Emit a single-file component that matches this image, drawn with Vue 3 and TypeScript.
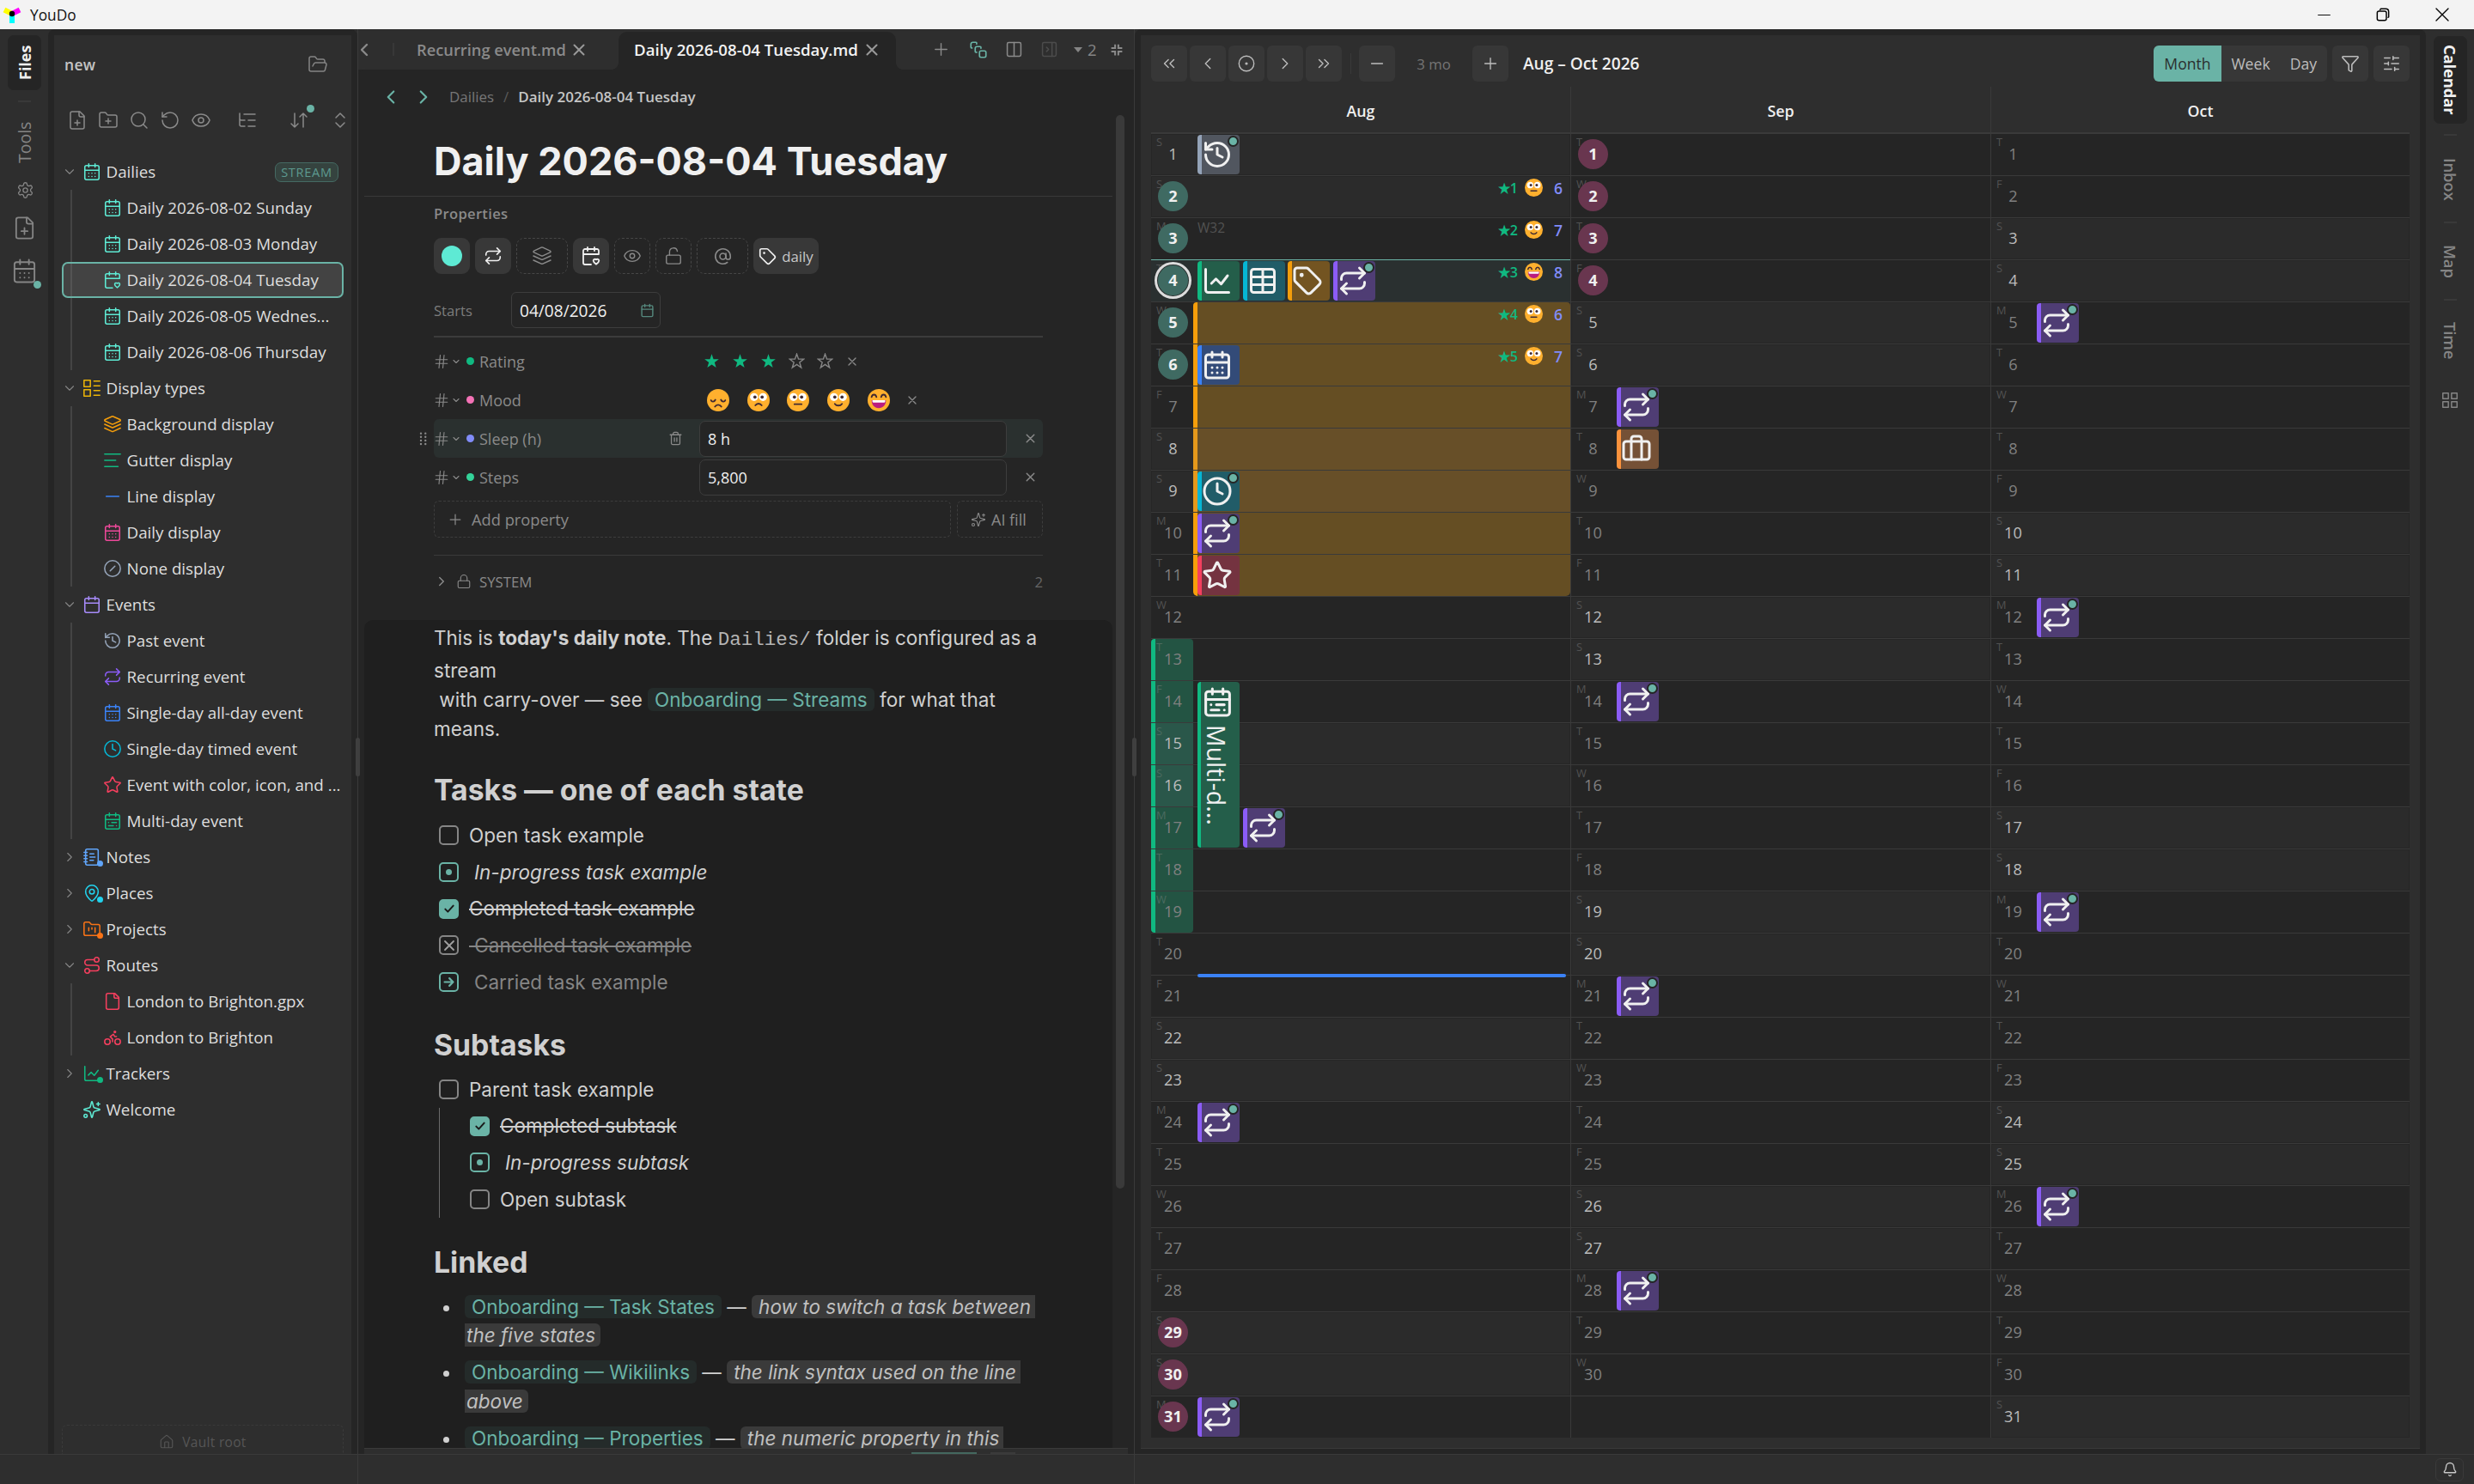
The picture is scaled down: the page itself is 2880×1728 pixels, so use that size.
<script setup lang="ts">
import { h } from 'vue'

const CAL = '<rect x="3" y="4" width="18" height="18" rx="2"/><path d="M8 2v4M16 2v4M3 10h18"/>'
const icons: Record<string, string> = {
  calDays: CAL + '<path d="M8 14h.01M12 14h.01M16 14h.01M8 18h.01M12 18h.01M16 18h.01"/>',
  cal: CAL,
  calRange: CAL + '<path d="M17 14h-6M13 18H7M7 14h.01M17 18h.01"/>',
  calHeart: '<path d="M3 10h18V6a2 2 0 0 0-2-2H5a2 2 0 0 0-2 2v14a2 2 0 0 0 2 2h7M8 2v4M16 2v4"/><path d="M21.3 17.5a2 2 0 0 0-3.3-1.2 2 2 0 0 0-3.3 1.2c0 2 3.3 4.2 3.3 4.2s3.3-2.2 3.3-4.2z"/>',
  filePlus: '<path d="M15 2H6a2 2 0 0 0-2 2v16a2 2 0 0 0 2 2h12a2 2 0 0 0 2-2V7z"/><path d="M14 2v4a2 2 0 0 0 2 2h4M9 15h6M12 18v-6"/>',
  file: '<path d="M15 2H6a2 2 0 0 0-2 2v16a2 2 0 0 0 2 2h12a2 2 0 0 0 2-2V7z"/><path d="M14 2v4a2 2 0 0 0 2 2h4"/>',
  folderPlus: '<path d="M12 10v6M9 13h6M20 20a2 2 0 0 0 2-2V8a2 2 0 0 0-2-2h-7.9a2 2 0 0 1-1.69-.9L9.6 3.9A2 2 0 0 0 7.93 3H4a2 2 0 0 0-2 2v13a2 2 0 0 0 2 2Z"/>',
  folderOpen: '<path d="m6 14 1.5-2.9A2 2 0 0 1 9.24 10H20a2 2 0 0 1 1.94 2.5l-1.54 6a2 2 0 0 1-1.95 1.5H4a2 2 0 0 1-2-2V5a2 2 0 0 1 2-2h3.9a2 2 0 0 1 1.69.9l.81 1.2a2 2 0 0 0 1.67.9H18a2 2 0 0 1 2 2v2"/>',
  search: '<circle cx="11" cy="11" r="8"/><path d="m21 21-4.3-4.3"/>',
  rotate: '<path d="M3 12a9 9 0 1 0 9-9 9.75 9.75 0 0 0-6.74 2.74L3 8"/><path d="M3 3v5h5"/>',
  eye: '<path d="M2.062 12.348a1 1 0 0 1 0-.696 10.75 10.75 0 0 1 19.876 0 1 1 0 0 1 0 .696 10.75 10.75 0 0 1-19.876 0"/><circle cx="12" cy="12" r="3"/>',
  listTree: '<path d="M21 12h-8M21 5H8M21 19h-8M3 4v6c0 1.1.9 2 2 2h4M3 10v7c0 1.1.9 2 2 2h4"/>',
  sort: '<path d="m3 16 4 4 4-4M7 20V4M21 8l-4-4-4 4M17 4v16"/>',
  upDown: '<path d="m7 15 5 5 5-5M7 9l5-5 5 5"/>',
  gear: '<path d="M12.22 2h-.44a2 2 0 0 0-2 2v.18a2 2 0 0 1-1 1.73l-.43.25a2 2 0 0 1-2 0l-.15-.08a2 2 0 0 0-2.73.73l-.22.38a2 2 0 0 0 .73 2.73l.15.1a2 2 0 0 1 1 1.72v.51a2 2 0 0 1-1 1.74l-.15.09a2 2 0 0 0-.73 2.73l.22.38a2 2 0 0 0 2.73.73l.15-.08a2 2 0 0 1 2 0l.43.25a2 2 0 0 1 1 1.73V20a2 2 0 0 0 2 2h.44a2 2 0 0 0 2-2v-.18a2 2 0 0 1 1-1.73l.43-.25a2 2 0 0 1 2 0l.15.08a2 2 0 0 0 2.73-.73l.22-.39a2 2 0 0 0-.73-2.73l-.15-.08a2 2 0 0 1-1-1.74v-.5a2 2 0 0 1 1-1.74l.15-.09a2 2 0 0 0 .73-2.73l-.22-.38a2 2 0 0 0-2.73-.73l-.15.08a2 2 0 0 1-2 0l-.43-.25a2 2 0 0 1-1-1.73V4a2 2 0 0 0-2-2z"/><circle cx="12" cy="12" r="3"/>',
  down: '<path d="m6 9 6 6 6-6"/>',
  right: '<path d="m9 18 6-6-6-6"/>',
  left: '<path d="m15 18-6-6 6-6"/>',
  dLeft: '<path d="m11 17-5-5 5-5M18 17l-5-5 5-5"/>',
  dRight: '<path d="m6 17 5-5-5-5M13 17l5-5-5-5"/>',
  target: '<circle cx="12" cy="12" r="9.5"/><circle cx="12" cy="12" r="1"/>',
  minus: '<path d="M5 12h14"/>',
  plus: '<path d="M5 12h14M12 5v14"/>',
  x: '<path d="M18 6 6 18M6 6l12 12"/>',
  layoutList: '<rect x="2" y="2" width="8" height="8"/><rect x="2" y="14" width="8" height="8"/><path d="M14.5 3H22M14.5 9H22M14.5 15H22M14.5 21H22"/>',
  layers: '<path d="M12.83 2.18a2 2 0 0 0-1.66 0L2.6 6.08a1 1 0 0 0 0 1.83l8.58 3.91a2 2 0 0 0 1.66 0l8.58-3.9a1 1 0 0 0 0-1.83z"/><path d="m2 12 9.17 4.16a2 2 0 0 0 1.66 0L22 12M2 17l9.17 4.16a2 2 0 0 0 1.66 0L22 17"/>',
  alignLeft: '<path d="M2 4h20M2 12h14M2 20h17"/>',
  line: '<path d="M4 12h16"/>',
  none: '<circle cx="12" cy="12" r="10"/><path d="m9 15 6-6"/>',
  history: '<path d="M3 12a9 9 0 1 0 9-9 9.75 9.75 0 0 0-6.74 2.74L3 8"/><path d="M3 3v5h5M12 7v5l4 2"/>',
  repeat: '<path d="m17 2 4 4-4 4"/><path d="M3 11v-1a4 4 0 0 1 4-4h14M7 22l-4-4 4-4"/><path d="M21 13v1a4 4 0 0 1-4 4H3"/>',
  clock: '<circle cx="12" cy="12" r="10"/><path d="M12 6v6l4 2"/>',
  star: '<path d="M11.525 2.295a.53.53 0 0 1 .95 0l2.31 4.679a2.123 2.123 0 0 0 1.595 1.16l5.166.756a.53.53 0 0 1 .294.904l-3.736 3.638a2.123 2.123 0 0 0-.611 1.878l.882 5.14a.53.53 0 0 1-.771.56l-4.618-2.428a2.122 2.122 0 0 0-1.973 0L6.396 21.01a.53.53 0 0 1-.77-.56l.881-5.139a2.122 2.122 0 0 0-.611-1.879L2.16 9.795a.53.53 0 0 1 .294-.906l5.165-.755a2.122 2.122 0 0 0 1.597-1.16z"/>',
  notebook: '<rect x="4" y="2" width="16" height="20" rx="2"/><path d="M2 6h4M2 10h4M2 14h4M2 18h4M9.5 8h5M9.5 12H16M9.5 16H14"/>',
  pin: '<path d="M20 10c0 4.993-5.539 10.193-7.399 11.799a1 1 0 0 1-1.202 0C9.539 20.193 4 14.993 4 10a8 8 0 0 1 16 0"/><circle cx="12" cy="10" r="3"/>',
  kanban: '<path d="M4 20h16a2 2 0 0 0 2-2V8a2 2 0 0 0-2-2h-7.93a2 2 0 0 1-1.66-.9l-.82-1.2A2 2 0 0 0 7.93 3H4a2 2 0 0 0-2 2v13c0 1.1.9 2 2 2ZM8 10v4M12 10v2M16 10v6"/>',
  route: '<circle cx="6" cy="19" r="3"/><path d="M9 19h8.5a3.5 3.5 0 0 0 0-7h-11a3.5 3.5 0 0 1 0-7H15"/><circle cx="18" cy="5" r="3"/>',
  bike: '<circle cx="18.5" cy="17.5" r="3.5"/><circle cx="5.5" cy="17.5" r="3.5"/><circle cx="15" cy="5" r="1"/><path d="M12 17.5V14l-3-3 4-3 2 3h2"/>',
  chart: '<path d="M3 3v16a2 2 0 0 0 2 2h16M7.500 14l3.500-3.500 4 4 5-6.500"/>',
  sparkles: '<path d="M9.937 15.5A2 2 0 0 0 8.5 14.063l-6.135-1.582a.5.5 0 0 1 0-.962L8.5 9.936A2 2 0 0 0 9.937 8.5l1.582-6.135a.5.5 0 0 1 .963 0L14.063 8.5A2 2 0 0 0 15.5 9.937l6.135 1.581a.5.5 0 0 1 0 .964L15.5 14.063a2 2 0 0 0-1.437 1.437l-1.582 6.135a.5.5 0 0 1-.963 0zM20 3v4M22 5h-4"/><circle cx="4" cy="20" r="2"/>',
  house: '<path d="M15 21v-8a1 1 0 0 0-1-1h-4a1 1 0 0 0-1 1v8M3 10a2 2 0 0 1 .709-1.528l7-5.999a2 2 0 0 1 2.582 0l7 5.999A2 2 0 0 1 21 10v9a2 2 0 0 1-2 2H5a2 2 0 0 1-2-2z"/>',
  nested: '<path d="M3 9.5h-.5a1 1 0 0 1-1-1V4A2.500 2.500 0 0 1 4 1.500h4.500a1 1 0 0 1 1 1V4"/><path d="M9.5 15.500h-1a1 1 0 0 1-1-1V10A2.500 2.500 0 0 1 10 7.500h4.500a1 1 0 0 1 1 1V10"/><rect x="13.500" y="13.500" width="9" height="9" rx="2"/>',
  columns: '<rect x="2" y="2" width="20" height="20" rx="2"/><path d="M12 2v20"/>',
  panelRight: '<rect x="2" y="2" width="20" height="20" rx="2"/><path d="M16 2v20M8 9l3 3-3 3"/>',
  shrink: '<path d="M3.5 9.300h6V3.500M20.500 9.300h-6V3.500M3.500 14.700h6v5.800M20.500 14.700h-6v5.800" stroke-linecap="butt" stroke-linejoin="miter"/>',
  unlock: '<rect x="3" y="11" width="18" height="11" rx="2"/><path d="M7 11V7a5 5 0 0 1 9.9-1"/>',
  lock: '<rect x="3" y="11" width="18" height="11" rx="2"/><path d="M7 11V7a5 5 0 0 1 10 0v4"/>',
  at: '<circle cx="12" cy="12" r="4"/><path d="M16 8v5a3 3 0 0 0 6 0v-1a10 10 0 1 0-4 8"/>',
  tag: '<path d="M12.586 2.586A2 2 0 0 0 11.172 2H4a2 2 0 0 0-2 2v7.172a2 2 0 0 0 .586 1.414l8.704 8.704a2.426 2.426 0 0 0 3.42 0l6.58-6.58a2.426 2.426 0 0 0 0-3.42z"/><circle cx="7.5" cy="7.5" r=".6" fill="currentColor"/>',
  trash: '<path d="M10 11v6M14 11v6M19 6v14a2 2 0 0 1-2 2H7a2 2 0 0 1-2-2V6M3 6h18M8 6V4a2 2 0 0 1 2-2h4a2 2 0 0 1 2 2v2"/>',
  grip: '<path d="M8 3.500h.01M8 9h.01M8 14.500h.01M8 20h.01M15 3.500h.01M15 9h.01M15 14.500h.01M15 20h.01"/>',
  hash: '<path d="M3 9h18M3 15h18M10 2 8 22M16 2l-2 20"/>',
  table: '<rect x="3" y="3" width="18" height="18" rx="2"/><path d="M3 9h18M3 15h18M12 3v18"/>',
  luggage: '<path d="M16 20V4a2 2 0 0 0-2-2h-4a2 2 0 0 0-2 2v16"/><rect x="2" y="6" width="20" height="14" rx="2"/>',
  funnel: '<path d="M10 20a1 1 0 0 0 .553.895l2 1A1 1 0 0 0 14 21v-7a2 2 0 0 1 .517-1.341L21.74 4.67A1 1 0 0 0 21 3H3a1 1 0 0 0-.742 1.67l7.225 7.989A2 2 0 0 1 10 14z"/>',
  sliders: '<path d="M10 5H3M12 19H3M14 3v4M16 17v4M21 12h-9M21 19h-5M21 5h-7M8 10v4M8 12H3"/>',
  grid: '<rect x="3" y="3" width="7" height="7"/><rect x="14" y="3" width="7" height="7"/><rect x="14" y="14" width="7" height="7"/><rect x="3" y="14" width="7" height="7"/>',
  bell: '<path d="M10.268 21a2 2 0 0 0 3.464 0M3.262 15.326A1 1 0 0 0 4 17h16a1 1 0 0 0 .74-1.673C19.41 13.956 18 12.499 18 8A6 6 0 0 0 6 8c0 4.499-1.411 5.956-2.738 7.326"/>',
  check: '<path d="m5 13 4.5 4.5L19 7"/>',
  arrow: '<path d="M4 12h16M13 5l7 7-7 7"/>',
  min: '<path d="M1 12h22"/>',
  restore: '<rect x="2" y="6" width="16" height="16" rx="3"/><path d="M7 3.5 8 2h9a5 5 0 0 1 5 5v9l-1 1"/>',
  close: '<path d="M1.5 1.5l21 21M22.5 1.5l-21 21"/>'
}

interface IcoProps { n: string; s?: number; w?: number }
const Ico = (p: IcoProps) =>
  h('svg', {
    width: p.s ?? 24, height: p.s ?? 24, viewBox: '0 0 24 24', fill: 'none', stroke: 'currentColor',
    'stroke-width': p.w ?? 1.5, 'stroke-linecap': 'round', 'stroke-linejoin': 'round',
    style: 'display:block;flex:none;overflow:visible', innerHTML: icons[p.n]
  })

const BASE = '<circle cx="16" cy="16" r="14" fill="#ffb02e"/>'
const EYES = '<circle cx="10.4" cy="12" r="5" fill="#fff"/><circle cx="21.6" cy="12" r="5" fill="#fff"/><circle cx="11.5" cy="12" r="2" fill="#402a32"/><circle cx="20.5" cy="12" r="2" fill="#402a32"/>'
const stroke = (d: string, w = 2) => `<path d="${d}" fill="none" stroke="#402a32" stroke-width="${w}" stroke-linecap="round"/>`
const faces = [
  BASE + stroke('M7 16c1 2.5 4 2.5 5.500-.5M25 16c-1 2.5-4 2.5-5.500-.5M12 24c2-3 6-3 8 0'),
  BASE + EYES + stroke('M12 22.5c2-3 6-3 8 0'),
  BASE + EYES + stroke('M11.5 21h9'),
  BASE + EYES + stroke('M11.5 20.5c2 3 7 3 9 0'),
  BASE + stroke('M7 12c1-4 5-4 6 0M19 12c1-4 5-4 6 0') + '<path d="M7 16h18c0 6-4 10-9 10s-9-4-9-10z" fill="#bb1d80"/><path d="M8 16h16v1.5a1.5 1.5 0 0 1-1.5 1.5h-13A1.5 1.5 0 0 1 8 17.5z" fill="#fff"/>'
]
const Face = (p: { i: number; s: number }) =>
  h('svg', { width: p.s, height: p.s, viewBox: '2 2 28 28', style: 'display:block;flex:none', innerHTML: faces[p.i] })

interface Node { t: string; i: string; c: string; open?: boolean; closed?: boolean; stream?: boolean; dot?: boolean; sel?: boolean; kids?: Node[] }
const teal = '#5eead4'
const tree: Node[] = [
  { t: 'Dailies', i: 'calDays', c: teal, open: true, stream: true, kids: [
    { t: 'Daily 2026-08-02 Sunday', i: 'calDays', c: teal },
    { t: 'Daily 2026-08-03 Monday', i: 'calDays', c: teal },
    { t: 'Daily 2026-08-04 Tuesday', i: 'calHeart', c: teal, sel: true },
    { t: 'Daily 2026-08-05 Wednes...', i: 'calDays', c: teal },
    { t: 'Daily 2026-08-06 Thursday', i: 'calDays', c: teal } ] },
  { t: 'Display types', i: 'layoutList', c: '#eab308', open: true, kids: [
    { t: 'Background display', i: 'layers', c: '#f59e0b' },
    { t: 'Gutter display', i: 'alignLeft', c: '#10b981' },
    { t: 'Line display', i: 'line', c: '#3b82f6' },
    { t: 'Daily display', i: 'calDays', c: '#ec4899' },
    { t: 'None display', i: 'none', c: '#94a3b8' } ] },
  { t: 'Events', i: 'cal', c: '#a78bfa', open: true, kids: [
    { t: 'Past event', i: 'history', c: '#94a3b8' },
    { t: 'Recurring event', i: 'repeat', c: '#8b5cf6' },
    { t: 'Single-day all-day event', i: 'calDays', c: '#3b82f6' },
    { t: 'Single-day timed event', i: 'clock', c: '#06b6d4' },
    { t: 'Event with color, icon, and ...', i: 'star', c: '#f43f5e' },
    { t: 'Multi-day event', i: 'calRange', c: '#10b981' } ] },
  { t: 'Notes', i: 'notebook', c: '#60a5fa', closed: true, dot: true },
  { t: 'Places', i: 'pin', c: '#22d3ee', closed: true, dot: true },
  { t: 'Projects', i: 'kanban', c: '#f97316', closed: true, dot: true },
  { t: 'Routes', i: 'route', c: '#f43f5e', open: true, kids: [
    { t: 'London to Brighton.gpx', i: 'file', c: '#f43f5e' },
    { t: 'London to Brighton', i: 'bike', c: '#f43f5e' } ] },
  { t: 'Trackers', i: 'chart', c: '#10b981', closed: true, dot: true },
  { t: 'Welcome', i: 'sparkles', c: teal }
]

interface Ev { i: string; c: string; bg: string; dot?: boolean }
const rec: Ev = { i: 'repeat', c: '#8b5cf6', bg: '#4f3d74', dot: true }
const gap: Ev = { i: '', c: '', bg: '' }
interface Day { n: number; l: string; wk: boolean; ring?: string; ev: Ev[]; band?: boolean; gut?: boolean; today?: boolean; rate?: [number, number, number]; label?: string }
const L = 'SMTWTFS'
function month(first: number, count: number): Day[] {
  return Array.from({ length: count }, (_, k) => {
    const d = (first + k) % 7
    return { n: k + 1, l: L[d], wk: d === 0 || d === 6, ev: [] }
  })
}
const aug = month(6, 31), sep = month(2, 30), oct = month(4, 31)
const on = (m: Day[], n: number, ...e: Ev[]) => { m[n - 1].ev = e }
on(aug, 1, { i: 'history', c: '#94a3b8', bg: '#51565f', dot: true })
on(aug, 4, { i: 'chart', c: '#10b981', bg: '#245e4a' }, { i: 'table', c: '#06b6d4', bg: '#215c68' }, { i: 'tag', c: '#f59e0b', bg: '#735421' }, rec)
on(aug, 6, { i: 'calDays', c: '#3b82f6', bg: '#334b78' })
on(aug, 9, { i: 'clock', c: '#06b6d4', bg: '#215c68', dot: true })
on(aug, 10, rec)
on(aug, 11, { i: 'star', c: '#f43f5e', bg: '#743340' })
on(aug, 17, gap, rec)
on(aug, 24, rec); on(aug, 31, rec)
for (const n of [7, 14, 21, 28]) on(sep, n, rec)
on(sep, 8, { i: 'luggage', c: '#fb923c', bg: '#755136' })
for (const n of [5, 12, 19, 26]) on(oct, n, rec)
for (let n = 2; n <= 6; n++) aug[n - 1].ring = 'teal'
for (const n of [29, 30, 31]) aug[n - 1].ring = 'plum'
for (const n of [1, 2, 3, 4]) sep[n - 1].ring = 'plum'
for (let n = 5; n <= 11; n++) aug[n - 1].band = true
for (let n = 13; n <= 19; n++) aug[n - 1].gut = true
aug[3].today = true
aug[2].label = 'W32'
const rates: [number, number, number][] = [[1, 2, 6], [2, 3, 7], [3, 4, 8], [4, 2, 6], [5, 3, 7]]
rates.forEach((r, k) => { aug[k + 1].rate = r })
const months = [{ t: 'Aug', d: aug }, { t: 'Sep', d: sep }, { t: 'Oct', d: oct }]
</script>

<template>
  <div class="app">
    <header class="title">
      <svg width="22" height="22" viewBox="0 0 22 22" stroke-width="6" stroke-linecap="butt">
        <path d="M11 10 2 5.5" stroke="#ff0" /><path d="M11 10l9-4.5" stroke="#f0f" /><path d="M11 10v11" stroke="#0ff" />
        <circle cx="11" cy="10" r="3.2" fill="#000" />
      </svg>
      <span>YouDo</span>
      <div class="wc"><Ico n="min" :s="15" /><Ico n="restore" :s="16" :w="2.2" /><Ico n="close" :s="16" :w="2" /></div>
    </header>

    <div class="body">
      <nav class="rail rl">
        <div class="vt on">Files</div><i class="sp" /><div class="vt t2">Tools</div>
        <Ico n="gear" :s="21" class="g1" /><Ico n="filePlus" :s="29" class="g2" />
        <div class="g3"><Ico n="calDays" :s="31" /><b class="dot" /></div>
      </nav>

      <aside class="side">
        <div class="sideIn">
          <div class="sh"><span>new</span><Ico n="folderOpen" /></div>
          <div class="tools">
            <Ico n="filePlus" /><Ico n="folderPlus" /><Ico n="search" /><Ico n="rotate" /><Ico n="eye" />
            <Ico n="listTree" class="m30" /><div class="rel m36"><Ico n="sort" /><b class="dot sd" /></div><Ico n="upDown" class="m24" />
          </div>
          <div class="tree">
            <div v-for="n in tree" :key="n.t">
              <div class="row">
                <span class="chev"><Ico v-if="n.open" n="down" :s="18" /><Ico v-if="n.closed" n="right" :s="18" /></span>
                <span class="ti" :style="{ color: n.c }"><Ico :n="n.i" :s="22" :w="1.7" /><b v-if="n.dot" class="td" :style="{ background: n.c }" /></span>
                <span>{{ n.t }}</span><em v-if="n.stream">STREAM</em>
              </div>
              <div v-if="n.kids" class="kids">
                <div v-for="k in n.kids" :key="k.t" class="row kid" :class="{ sel: k.sel }">
                  <span class="ti" :style="{ color: k.c }"><Ico :n="k.i" :s="22" :w="1.7" /></span><span>{{ k.t }}</span>
                </div>
              </div>
            </div>
          </div>
          <div class="vault"><Ico n="house" :s="18" /><span>Vault root</span></div>
        </div>
      </aside>

      <div class="split"><b /></div>

      <main class="ed">
        <div class="tabs">
          <span class="clip"><Ico n="left" :s="24" :w="2.4" /></span><i class="vs" />
          <span class="tab a">Recurring event.md</span><Ico n="x" :s="22" :w="2.2" class="tx" />
          <div class="act"><span class="tab b">Daily 2026-08-04 Tuesday.md</span><Ico n="x" :s="22" :w="2.2" class="tx" /></div>
          <div class="ti2">
            <Ico n="plus" :s="23" /><Ico n="nested" :s="20" :w="2" class="tl" /><Ico n="columns" :s="19" :w="1.9" /><Ico n="panelRight" :s="19" :w="1.9" class="dim" />
          </div>
          <span class="cnt"><i />2</span><Ico n="shrink" :s="18" :w="2.7" class="shr" />
        </div>
        <div class="pane">
          <div class="crumb"><Ico n="left" :s="26" :w="2" class="tl" /><Ico n="right" :s="26" :w="2" class="tl" /><span class="cr1">Dailies</span><span class="cr2">/</span><span class="cr3">Daily 2026-08-04 Tuesday</span></div>
          <div class="scroll">
            <div class="doc">
              <h1>Daily 2026-08-04 Tuesday</h1>
              <section class="props">
                <div class="pt">Properties</div>
                <div class="btns">
                  <div class="bt f"><b class="big" /></div><div class="bt f"><Ico n="repeat" :s="22" :w="1.8" /></div>
                  <div class="bt d w"><Ico n="layers" /></div><div class="bt f"><Ico n="calHeart" :s="24" :w="1.8" /></div>
                  <div class="bt d"><Ico n="eye" :s="22" /></div><div class="bt d"><Ico n="unlock" :s="22" /></div>
                  <div class="bt d w"><Ico n="at" :s="21" :w="1.8" /></div><div class="bt f tg"><Ico n="tag" :s="21" :w="1.9" /><span>daily</span></div>
                </div>
                <div class="starts"><span>Starts</span><div class="date"><span>04/08/2026</span><Ico n="cal" :s="17" :w="2" /></div></div>
                <div class="hr2" />
                <div class="pr"><Ico n="hash" :s="18" /><Ico n="down" :s="12" :w="2.2" class="pc" /><b style="background:#10b981" /><span class="lb">Rating</span>
                  <div class="stars"><svg v-for="k in 5" :key="k" width="19" height="19" viewBox="0 0 24 24" :class="{ on: k <= 3 }"><path d="M12 1.5 14.6 9H22.5L16.2 13.8 18.5 21.5 12 17 5.5 21.5 7.8 13.8 1.5 9H9.4Z" /></svg></div><Ico n="x" :s="16" :w="2" class="sx" />
                </div>
                <div class="pr"><Ico n="hash" :s="18" /><Ico n="down" :s="12" :w="2.2" class="pc" /><b style="background:#f472b6" /><span class="lb">Mood</span>
                  <div class="moods"><Face v-for="k in 5" :key="k" :i="k - 1" :s="26" /></div><Ico n="x" :s="16" :w="2" class="mx" />
                </div>
                <div class="pr hov"><Ico n="grip" :s="18" :w="3.2" class="grip" /><Ico n="hash" :s="18" /><Ico n="down" :s="12" :w="2.2" class="pc" /><b style="background:#818cf8" /><span class="lb">Sleep (h)</span><Ico n="trash" :s="17" :w="1.8" class="tr" />
                  <div class="inp">8 h</div><Ico n="x" :s="17" :w="2" class="ix" />
                </div>
                <div class="pr"><Ico n="hash" :s="18" /><Ico n="down" :s="12" :w="2.2" class="pc" /><b style="background:#34d399" /><span class="lb">Steps</span>
                  <div class="inp">5,800</div><Ico n="x" :s="17" :w="2" class="ix" />
                </div>
                <div class="add"><div class="ab"><Ico n="plus" :s="20" /><span>Add property</span></div><div class="ai"><Ico n="sparkles" :s="18" /><span>AI fill</span></div></div>
                <div class="sys"><Ico n="right" :s="18" :w="2" /><Ico n="lock" :s="18" /><span>SYSTEM</span><span class="n">2</span></div>
              </section>
              <article class="note">
                <p class="l1">This is <strong>today's daily note</strong>. The <code>Dailies/</code> folder is configured as a</p>
                <p>stream</p>
                <p> with carry-over — see <a>Onboarding — Streams</a> for what that</p>
                <p>means.</p>
                <h2>Tasks — one of each state</h2>
                <div class="tk"><b class="cb" />Open task example</div>
                <div class="tk it"><b class="cb t"><u /></b>In-progress task example</div>
                <div class="tk"><b class="cb k"><Ico n="check" :s="16" :w="3" /></b><s>Completed task example</s></div>
                <div class="tk mu"><b class="cb"><Ico n="x" :s="20" :w="2.2" /></b><s> Cancelled task example</s></div>
                <div class="tk mu ca"><b class="cb t"><Ico n="arrow" :s="15" :w="3.4" /></b>Carried task example</div>
                <h2 class="h2b">Subtasks</h2>
                <div class="tk"><b class="cb" />Parent task example</div>
                <div class="subs">
                  <div class="tk"><b class="cb k"><Ico n="check" :s="16" :w="3" /></b><s>Completed subtask</s></div>
                  <div class="tk it"><b class="cb t"><u /></b>In-progress subtask</div>
                  <div class="tk"><b class="cb" />Open subtask</div>
                </div>
                <h2 class="h2c">Linked</h2>
                <div class="li"><i />
                  <p><a>Onboarding — Task States</a> — <mark class="m1">how to switch a task between</mark></p>
                  <p><mark class="m2">the five states</mark></p></div>
                <div class="li"><i />
                  <p><a>Onboarding — Wikilinks</a> — <mark class="m1">the link syntax used on the line</mark></p>
                  <p><mark class="m2">above</mark></p></div>
                <div class="li"><i />
                  <p><a>Onboarding — Properties</a> — <mark class="m1">the numeric property in this</mark></p></div>
              </article>
            </div>
            <div class="sb" />
          </div>
        </div>
        <div class="foot"><i class="fa" /><i class="fb" /></div>
      </main>

      <div class="split"><b /></div>

      <section class="calp">
        <div class="calIn">
          <div class="cbar">
            <div class="q"><Ico n="dLeft" :s="22" /></div><div class="q"><Ico n="left" :s="22" /></div><div class="q"><Ico n="target" :s="22" /></div><div class="q"><Ico n="right" :s="22" /></div><div class="q"><Ico n="dRight" :s="22" /></div>
            <i class="vs2" /><div class="q"><Ico n="minus" :s="22" /></div><span class="mo">3 mo</span><div class="q"><Ico n="plus" :s="22" /></div>
            <span class="rng">Aug – Oct 2026</span>
            <div class="seg"><span class="on">Month</span><span class="wkk">Week</span><span class="dy">Day</span></div>
            <div class="q sq"><Ico n="funnel" :s="22" :w="1.7" /></div><div class="q sq"><Ico n="sliders" :s="22" :w="1.7" /></div>
          </div>
          <div class="cols">
            <div v-for="(m, mi) in months" :key="m.t" class="col" :class="'mcol' + mi">
              <div class="mh">{{ m.t }}</div>
              <div v-for="d in m.d" :key="d.n" class="day" :class="{ wk: d.wk, today: d.today, end: d.n === 31 }">
                <div class="gt" :class="{ gut: d.gut, last: d.gut && d.n === 19, first: d.gut && d.n === 13 }"><small>{{ d.l }}</small><span class="num" :class="[d.ring, { ringed: d.ring, now: d.today }]">{{ d.n }}</span></div>
                <div class="bd" :class="{ band: d.band, bend: d.n === 11, btop: d.n === 5 }">
                  <span v-if="d.label" class="wl">{{ d.label }}</span>
                  <div v-for="(e, k) in d.ev" :key="k" class="ev" :class="{ ghost: !e.i }" :style="{ background: e.bg, borderLeftColor: e.c }"><Ico v-if="e.i" :n="e.i" :s="36" :w="2" /><b v-if="e.dot" /></div>
                  <div v-if="d.rate" class="rate"><span class="st">★{{ d.rate[0] }}</span><Face :i="d.rate[1]" :s="21" /><span class="sl">{{ d.rate[2] }}</span></div>
                  <div v-if="mi === 0 && d.n === 14" class="multi"><Ico n="calRange" :s="37" :w="2" /><span>Multi-d...</span></div>
                  <div v-if="mi === 0 && d.n === 21" class="bl" />
                </div>
              </div>
            </div>
          </div>
        </div>
      </section>

      <nav class="rail rr">
        <div class="vt on">Calendar</div><i class="sp" /><div class="vt v1">Inbox</div><i class="sp far" /><div class="vt v2">Map</div><i class="sp far" /><div class="vt v3">Time</div>
        <Ico n="grid" :s="22" :w="1.6" class="gg" />
      </nav>
    </div>

    <footer class="status"><i class="s1" /><i class="s2" /><div class="bell"><Ico n="bell" :s="18" :w="1.8" /></div></footer>
  </div>
</template>

<style>
html, body { margin: 0; background: #2e2e2e; overflow: hidden; }
</style>

<style scoped>
* { box-sizing: border-box; }
.app { width: 2880px; height: 1728px; display: flex; flex-direction: column; overflow: hidden; background: #2e2e2e; color: #8a8a8a; font-family: "Open Sans", "Noto Sans", sans-serif; font-size: 18.3px; }
p, h1, h2 { margin: 0; }
.title { height: 34px; flex: none; background: #f3f3f3; color: #111; display: flex; align-items: center; padding-left: 3px; font-size: 17.3px; }
.title > span { margin-left: 10px; margin-top: 1px; }
.wc { margin-left: auto; display: flex; align-items: center; gap: 53px; padding-right: 29px; color: #000; }
.body { flex: 1; min-height: 0; display: flex; }
.rail { width: 56px; flex: none; display: flex; flex-direction: column; align-items: center; padding-top: 7px; color: #858585; }
.vt { writing-mode: vertical-rl; display: flex; align-items: center; justify-content: center; width: 39px; font-weight: 600; font-size: 18.5px; }
.rl .vt { transform: rotate(180deg); }
.vt.on { background: #252525; border-radius: 7px; color: #f0f0f0; font-weight: 700; }
.rl .on { height: 64px; } .rl .vt { font-size: 18px; } .rl .t2 { height: 46px; margin-top: 24px; font-weight: 500; font-size: 19.5px; }
.sp { width: 15px; height: 2px; background: #393939; margin-top: 12px; flex: none; }
.sp.far { margin-top: 24px; }
.g1 { margin-top: 22px; margin-left: 2px; } .g2 { margin-top: 19px; } .g3 { margin-top: 20px; position: relative; }
.dot { position: absolute; width: 9px; height: 9px; border-radius: 50%; background: #6ab3a6; right: -4px; bottom: -5px; }
.side { width: 360px; flex: none; background: #252525; padding: 7px 7px 0; border-radius: 8px 8px 0 0; }
.sideIn { height: 100%; background: #2e2e2e; position: relative; overflow: hidden; padding: 0 9px; display: flex; flex-direction: column; }
.sh { display: flex; justify-content: space-between; align-items: center; height: 67px; padding: 0 18px 0 3px; font-weight: 600; color: #c4c4c4; font-size: 17.5px; letter-spacing: .3px; }
.sh svg { color: #858585; }
.tools { display: flex; height: 64px; align-items: center; gap: 12px; padding-left: 6px; }
.m30 { margin-left: 18px; } .m36 { margin-left: 24px; } .m24 { margin-left: 12px; }
.rel { position: relative; } .sd { right: -6px; bottom: auto; top: -6px; }
.tree { margin-top: 7px; flex: 1; font-size: 18.8px; }
.row { height: 42px; display: flex; align-items: center; color: #dedede; white-space: nowrap; }
.chev { width: 18px; height: 18px; color: #858585; }
.ti { width: 22px; margin: 0 6px 0 5.5px; position: relative; }
.td { position: absolute; right: -2px; bottom: 0; width: 7px; height: 7px; border-radius: 50%; }
.kids { background: linear-gradient(#444, #444) 10px 0 / 2px 100% no-repeat; }
.kid { padding-left: 40.5px; border: 2px solid transparent; border-radius: 7px; }
.kid .ti { margin-right: 5.5px; }
.kid.sel { border-color: #6ab3a6; background: linear-gradient(#545454, #545454) 8px 0 / 2px 100% no-repeat, #434343; }
em { font-style: normal; margin-left: auto; margin-right: 6px; width: 74px; height: 23px; border: 1.5px solid #456a63; background: #35433f; color: #5d9a8f; border-radius: 7px; font-size: 14.6px; letter-spacing: .7px; display: flex; align-items: center; justify-content: center; }
.vault { height: 34px; border: 1px dashed #3a3a3a; border-bottom: 0; border-radius: 6px 6px 0 0; display: flex; justify-content: center; align-items: center; gap: 9px; color: #565656; font-size: 15.5px; padding-top: 5px; letter-spacing: .3px; }
.split { width: 1px; flex: none; background: #3a3a3a; position: relative; z-index: 3; }
.split b { position: absolute; left: -2px; top: 825px; width: 5px; height: 45px; border-radius: 3px; background: #3f3f3f; }

.ed { width: 903px; flex: none; display: flex; flex-direction: column; background: #252525; }
.tabs { height: 47px; flex: none; background: #2e2e2e; display: flex; align-items: center; font-weight: 600; }
.clip { width: 14px; height: 24px; overflow: hidden; display: flex; justify-content: flex-end; margin-left: 3px; }
.clip svg { margin-right: -2px; }
.vs { width: 2px; height: 15px; background: #383838; margin: 0 26px 0 23px; }
.tab { white-space: nowrap; } .tx { margin-left: 5px; color: #999; }
.tab.a { width: 173px; font-size: 18.3px; }
.act { margin-left: 35px; width: 323px; height: 44px; align-self: flex-end; background: #252525; border-radius: 10px 10px 0 0; display: flex; align-items: center; padding: 0 0 3px 18px; color: #f2f2f2; position: relative; }
.act::before, .act::after { content: ""; position: absolute; bottom: 0; width: 8px; height: 8px; }
.act::before { left: -8px; background: radial-gradient(circle at 0 0, #2e2e2e 7.5px, #252525 8px); }
.act::after { right: -8px; background: radial-gradient(circle at 100% 0, #2e2e2e 7.5px, #252525 8px); }
.act .tab { width: 261px; font-size: 18.65px; }
.ti2 { display: flex; align-items: center; margin-left: 41px; gap: 22px; }
.tl { color: #6ab3a6; } .dim { color: #4c4c4c; }
.cnt { display: flex; align-items: center; gap: 6px; font-weight: 500; font-size: 18.5px; margin-left: 19px; color: #858585; }
.cnt i { border: 5px solid transparent; border-top: 6px solid #858585; border-bottom: 0; }
.shr { margin-left: 14px; color: #8a8a8a; }
.pane { flex: 1; min-height: 0; display: flex; flex-direction: column; border-radius: 8px 8px 0 0; background: #252525; }
.crumb { height: 53px; padding: 10px 0 0 25px; flex: none; display: flex; align-items: center; font-size: 16.9px; white-space: nowrap; }
.crumb svg + svg { margin-left: 12px; }
.crumb span { margin-top: -1px; }
.crumb .cr1 { margin-left: 17px; color: #777; } .crumb .cr2 { margin-left: 11px; margin-right: 11px; color: #5a5a5a; } .cr3 { color: #c6c6c6; font-weight: 600; font-size: 17px; }
.scroll { flex: 1; min-height: 0; display: flex; }
.doc { width: 871px; margin-left: 7px; flex: none; display: flex; flex-direction: column; min-height: 0; }
.sb { width: 10px; height: 1250px; margin-left: 4px; border-radius: 5px; background: #3a3a3a; }
h1 { font: 700 45px/1 Inter, sans-serif; color: #f0f0f0; height: 95px; flex: none; padding: 31px 0 0 81px; border-bottom: 1px solid #3a3a3a; white-space: nowrap; }
.props { padding: 0 81px; height: 493px; flex: none; display: flex; flex-direction: column; }
.pt { height: 48px; line-height: 40px; font-weight: 600; font-size: 16.6px; letter-spacing: .3px; flex: none; }
.btns { display: flex; gap: 6px; }
.bt { width: 42px; height: 42px; border-radius: 9px; display: flex; align-items: center; justify-content: center; flex: none; }
.bt.f { background: #383838; color: #f0f0f0; } .bt.d { border: 1px dashed #474747; } .bt.w { width: 60px; }
.bt.tg { width: 76px; gap: 6px; } .tg span { color: #c8c8c8; font-size: 16.8px; }
.big { width: 24px; height: 24px; border-radius: 50%; background: #5eead4; }
.starts { display: flex; margin-top: 21px; height: 42px; align-items: center; font-size: 16.6px; flex: none; }
.starts > span { width: 90px; color: #7c7c7c; }
.date { width: 174px; height: 42px; border: 1px solid #3d3d3d; border-radius: 6px; display: flex; align-items: center; justify-content: space-between; padding: 2px 6px 0 9px; color: #f0f0f0; font-size: 19.1px; }
.date svg { color: #55887d; margin-top: -2px; }
.hr2 { height: 2px; background: #3c3c3c; margin: 9px 0 5px; flex: none; }
.pr { height: 45px; flex: none; display: flex; align-items: center; position: relative; border-radius: 6px; }
.pr > b { width: 9px; height: 9px; border-radius: 50%; margin: 0 6px 0 6px; }
.pc { margin-left: 2px; }
.lb { width: 213px; margin-right: 43px; font-size: 18px; }
.hov { background: #2a302f; } .hov .lb { margin-right: 0; } .tr { margin: 0 19px 0 7px; }
.grip { position: absolute; left: -21px; }
.stars { display: flex; gap: 14px; margin-left: 5px; } .stars path { fill: none; stroke: #858585; stroke-width: 1.8; } .stars .on path { fill: #10b981; stroke: none; }
.sx { margin-left: 14px; } .moods { display: flex; gap: 20.7px; margin-left: 9px; } .mx { margin-left: 18px; }
.inp { width: 358px; height: 42px; border: 1px solid #3d3d3d; border-radius: 7px; background: #252525; color: #f0f0f0; line-height: 40px; padding-left: 9px; font-size: 18px; }
.ix { margin-left: 19px; }
.add { display: flex; gap: 7px; height: 43px; margin-top: 5px; flex: none; }
.add > div { border: 1px dashed #3d3d3d; border-radius: 6px; display: flex; align-items: center; padding-left: 14px; }
.ab { width: 602px; gap: 9px; } .add > .ai { width: 100px; gap: 6px; font-size: 18px; padding-left: 15px; }
.sys { margin-top: 20px; border-top: 1px solid #3a3a3a; height: 61px; display: flex; align-items: center; font-size: 16.8px; flex: none; }
.sys svg + svg { margin-left: 8px; } .sys span { margin-left: 9px; } .sys .n { margin-left: auto; color: #666; }

.note { flex: 1; min-height: 0; overflow: hidden; background: #1f1f1f; border-radius: 10px 10px 0 0; padding: 4px 0 0 81px; color: #d0d0d0; font: 22.5px/33.75px Inter, sans-serif; }
.note p { white-space: pre; height: 33.75px; }
.note .l1 { height: 38px; line-height: 34px; }
code { font: 22.5px/20px "Liberation Mono", monospace; color: #b4b4b4; }
a { background: #242b2a; color: #6ab3a6; padding: 0 8px; border-radius: 6px; }
mark { background: #3a3a3a; color: #c0c0c0; font-style: italic; }
.m1 { padding-left: 8px; padding-right: 5px; border-radius: 6px 0 0 6px; } .m2 { padding-right: 6px; padding-left: 2px; border-radius: 0 6px 6px 0; }
h2 { font: 700 33.75px/40px Inter, sans-serif; margin-top: 35px; margin-bottom: 11px; }
.h2b { margin-top: 32px; margin-bottom: 10px; } .h2c { margin-top: 32px; margin-bottom: 14.5px; }
.tk { height: 42.75px; display: flex; align-items: center; white-space: pre; padding-left: 6px; }
.cb { width: 23px; height: 23px; border: 2px solid #858585; border-radius: 5px; margin-right: 12px; display: flex; align-items: center; justify-content: center; flex: none; color: #a0a0a0; }
.cb.t { border-color: #6ab3a6; color: #6ab3a6; } .cb.k { background: #6ab3a6; border-color: #6ab3a6; color: #1a1a1a; } .cb u { width: 7px; height: 7px; border-radius: 50%; background: #6ab3a6; }
.it { font-style: italic; } .it .cb, .ca .cb { margin-right: 18px; } .mu { color: #858585; }
s { text-decoration-thickness: 2px; }
.subs { margin-left: 6px; border-left: 1px solid #6a6a6a; padding-left: 35px; }
.subs .tk { padding-left: 0; }
.li { padding-left: 36px; position: relative; margin-bottom: 9px; }
.li > i { position: absolute; left: 11px; top: 15px; width: 7px; height: 7px; border-radius: 50%; background: #d0d0d0; }
.foot { height: 7px; margin: 0 7px; flex: none; border-top: 1px solid #3a3a3a; background: #2e2e2e; display: flex; padding: 4px 0 0 637px; gap: 16px; }
.fa { width: 76px; height: 2px; background: #44685f; } .fb { width: 29px; height: 2px; background: #3a3a3a; }

.calp { width: 1503px; flex: none; background: #252525; padding: 7px 7px 0; border-radius: 8px 8px 0 0; }
.calIn { height: 1646px; background: #2e2e2e; border-bottom: 1px solid #3a3a3a; padding: 12px 12px 0; }
.cbar { display: flex; height: 42px; align-items: center; gap: 3px; color: #bdbdbd; }
.q { width: 42px; height: 42px; background: #373737; border-radius: 6px; display: flex; align-items: center; justify-content: center; flex: none; }
.vs2 { width: 1px; height: 24px; background: #3a3a3a; margin: 0 6px 0 7px; }
.mo { width: 84px; text-align: center; font-size: 16.8px; color: #757575; }
.rng { margin-left: 14px; color: #f0f0f0; font-weight: 600; font-size: 19.1px; white-space: nowrap; }
.seg { margin-left: auto; display: flex; background: #373737; border-radius: 6px; overflow: hidden; height: 42px; line-height: 42px; text-align: center; font-size: 17.6px; }
.seg .on { width: 79px; background: #6ab3a6; color: #2a2f2e; } .wkk { width: 68px; } .dy { width: 55px; }
.sq { margin-left: 3px; }
.cols { display: flex; margin-top: 6px; height: 1573px; }
.col { width: 489px; flex: none; border-right: 1px solid #3a3a3a; background: #252525; } .mcol2 { width: 487px; border-right: 0; }
.mh { height: 55px; border-bottom: 2px solid #3a3a3a; background: #2e2e2e; display: flex; align-items: center; justify-content: center; padding-top: 3px; color: #f0f0f0; font-weight: 600; font-size: 17.8px; }
.day { height: 49px; background: #252525; border-bottom: 1px solid #3a3a3a; display: flex; position: relative; }
.day.end { border-bottom: 0; height: 48px; }
.day.wk { background: #2b2b2b; box-shadow: inset 0 0 0 1px #262626; }
.day.today { background: #2a3030; box-shadow: 0 -1px 0 #6ab3a6; }
.gt { width: 48px; position: relative; display: flex; align-items: center; justify-content: center; flex: none; padding-left: 3px; }
.mcol0 .gt { width: 49px; padding-left: 2px; }
.mcol0 .gut { background: #235443; border-left: 5px solid #10b981; padding-left: 0; padding-right: 3px; } .wk .gut { background: #2a574a; }
.gut.first { border-radius: 4px 4px 0 0; } .gut.last { border-radius: 0 0 4px 4px; }
small { position: absolute; left: 6px; top: 0; font-size: 12.8px; line-height: 18px; color: #525252; }
.gut small { left: 1px; color: #4b6b60; }
.num { position: relative; top: -.5px; font-size: 18.2px; width: 35px; height: 35px; line-height: 34px; text-align: center; color: #808080; }
.wk .num { color: #bcbcbc; font-weight: 500; }
.num.ringed { color: #f0f0f0; font-weight: 700; border-radius: 50%; }
.teal { background: #3f6a62; } .plum { background: #69364f; }
.now::after { content: ""; position: absolute; inset: -4px; border: 3px solid #dcdcdc; border-radius: 50%; }
.bd { flex: 1; display: flex; align-items: flex-start; padding: .5px 0 0 5px; gap: 3.5px; position: relative; }
.band { background: #654e23; border-left: 5px solid #f59e0b; padding-left: 0; } .wk .band { background: #674f28; border-left-color: #e5991b; }
.bend { border-radius: 0 0 5px 5px; } .btop { border-radius: 4px 4px 0 0; }
.ev { width: 49px; height: 46px; border-left: 5px solid; border-radius: 4px; position: relative; display: flex; align-items: center; color: #f0f0f0; flex: none; }
.ev.ghost { visibility: hidden; }
.ev b { position: absolute; width: 13px; height: 13px; right: 1px; top: 1px; background: #6ab3a6; border: 2px solid #252525; border-radius: 50%; }
.wl { font-size: 15.5px; color: #525252; line-height: 21px; }
.rate { position: absolute; right: 9px; top: 3px; height: 21px; display: flex; align-items: center; font-weight: 600; }
.st { color: #10b981; font-size: 16px; margin-right: 8px; } .sl { color: #818cf8; font-size: 17.5px; margin-left: 13px; font-weight: 600; }
.multi { position: absolute; left: 5px; top: .5px; width: 49px; height: 193px; background: #245e4a; border-left: 4px solid #10b981; border-radius: 4px; z-index: 2; display: flex; flex-direction: column; align-items: flex-start; padding-top: 5px; color: #f0f0f0; font-size: 28.5px; }
.multi span { writing-mode: vertical-rl; line-height: 36px; margin-top: 8px; white-space: nowrap; }
.multi svg { margin-left: 1px; }
.bl { position: absolute; left: 5px; right: 5px; top: -2px; height: 4px; background: #3b82f6; border-radius: 2px; }
.rr { padding-top: 8px; }
.rr .on { height: 102px; } .rr .v1 { height: 51px; margin-top: 25px; } .rr .v2 { height: 39px; margin-top: 25px; } .rr .v3 { height: 43px; margin-top: 25px; } .rr .vt { letter-spacing: -.2px; }
.rr .vt:not(.on) { font-weight: 600; } .gg { margin-top: 37px; }
.status { height: 35px; flex: none; border-top: 1px solid #3a3a3a; display: flex; align-items: center; }
.status > i { border-right: 1px solid #3a3a3a; height: 100%; } .s1 { width: 417px; } .s2 { width: 904px; }
.bell { margin-left: auto; margin-right: 12px; width: 33px; height: 27px; border: 1px solid #3a3a3a; border-radius: 6px; display: flex; align-items: center; justify-content: center; color: #c8c8c8; }
</style>
